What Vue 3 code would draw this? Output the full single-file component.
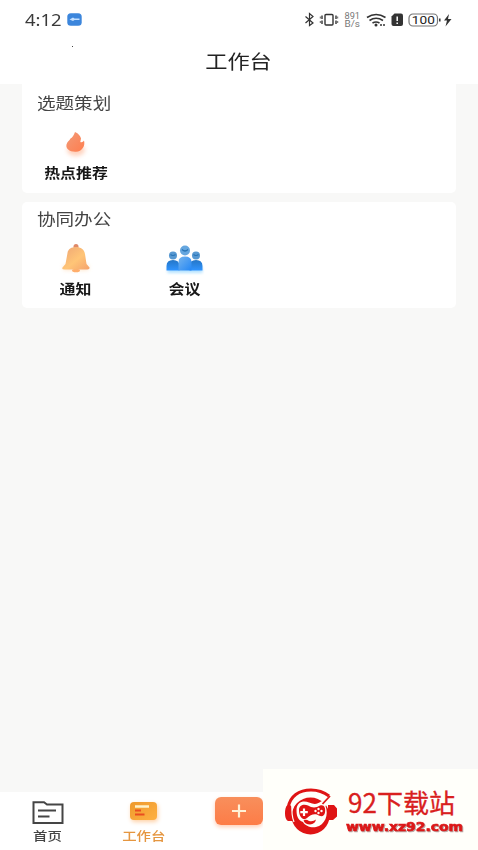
<script setup>
const topics = [{ label: '热点推荐', icon: 'flame' }]
const office = [
  { label: '通知', icon: 'bell' },
  { label: '会议', icon: 'people' },
]
</script>

<template>
  <div class="screen">
    <header class="header">
      <div class="status">
        <span class="clock"><span>4:12</span></span>
        <svg class="badge" width="15" height="13" viewBox="0 0 15 13">
          <rect x=".3" y=".3" width="14.4" height="12.4" rx="3.5" fill="#3c86dc" />
          <path d="M2.500 6.500 6 4.500l1.500 1h5v1.500H7.500L6 8z" fill="#c4e0ff" />
        </svg>
        <svg class="tray" width="150" height="18" viewBox="0 0 150 18" fill="none" stroke="#333">
          <path d="M1.500 5.500 9 12 5.500 14.500V2.500l3.500 3-7.500 6.500" stroke-width="1.200" />
          <rect x="21" y="3.500" width="8" height="10.500" rx="1" stroke-width="1.400" />
          <path d="M18 4.500v3.500M18 9.500v3.500M32 4.500v3.500M32 9.500v3.500" stroke-width="1.400" />
          <path d="M16.300 5.500v2M16.300 10v2M33.700 5.500v2M33.700 10v2" stroke-width=".8" />
          <g class="speed" fill="#777" stroke="none">
            <text x="40.500" y="7.500" textLength="15.500" lengthAdjust="spacingAndGlyphs">891</text>
            <text x="40.500" y="15.800" textLength="15.500" lengthAdjust="spacingAndGlyphs">B/s</text>
          </g>
          <path d="M63 6.500q9-6 18.500 0M65.500 9.500q6.500-4.500 13.500 0M68.500 12q3.500-2 7 0" stroke-width="1.600" />
          <circle cx="72" cy="14" r="1.500" fill="#333" stroke="none" />
          <path d="M76 14h5" stroke-width="1.500" stroke-dasharray="2 1" />
          <path d="M90.500 2.500h6.500q2 0 2 2v8.500q0 2-2 2h-7.500q-2 0-2-2V5.500z" fill="#333" stroke="none" />
          <path d="M93.200 5.500v4.500M93.200 11.500v1.600" stroke="#fff" stroke-width="1.500" />
          <rect x="105" y="3" width="28.500" height="12" rx="4" stroke="#777" stroke-width="1.200" />
          <text class="percent" x="107.800" y="13.100" textLength="23" lengthAdjust="spacingAndGlyphs" fill="#222" stroke="none">100</text>
          <path d="M135.800 7.500v3" stroke-width="1.500" />
          <path d="M145 3 140 9.500h3l-1.500 6 6-7.500h-3.500z" fill="#333" stroke="none" />
        </svg>
      </div>
      <h1 class="title"><span>工作台</span></h1>
      <i class="speck"></i>
    </header>

    <main class="content">
      <section v-for="(items, n) in [topics, office]" :key="n" class="card" :class="{ first: n === 0 }">
        <h2><span>{{ n === 0 ? '选题策划' : '协同办公' }}</span></h2>
        <div class="grid">
          <div v-for="item in items" :key="item.label" class="item">
            <svg v-if="item.icon === 'flame'" class="icon" width="40" height="36" viewBox="0 0 40 36">
              <defs>
                <linearGradient id="fire" x1="0" y1="0" x2="1" y2="1"><stop stop-color="#f29b78" /><stop offset="1" stop-color="#ff7d4e" /></linearGradient>
                <filter id="soft" x="-50%" y="-50%" width="200%" height="200%"><feGaussianBlur stdDeviation="2.200" /></filter>
              </defs>
              <ellipse cx="20.500" cy="24" rx="9" ry="6" fill="#ffc7ae" opacity=".8" filter="url(#soft)" />
              <path d="M19.500 6C23 7.500 25 10 25.500 12.500L24.800 16C26.500 16.500 27.500 16 28.500 14.500C30 20 26.500 25.500 20.500 25.700C14 26 10 22.500 11 18.500C11.500 15.500 14 15 15 12.500C16.500 12 18.500 9 19.500 6Z" fill="url(#fire)" />
            </svg>
            <svg v-else-if="item.icon === 'bell'" class="icon" width="40" height="36" viewBox="0 0 40 36">
              <defs>
                <linearGradient id="gold" x1="0" y1="0" x2="1" y2="1"><stop stop-color="#eea575" /><stop offset=".55" stop-color="#ffc577" /><stop offset="1" stop-color="#f4a16c" /></linearGradient>
                <filter id="glow" x="-30%" y="-100%" width="160%" height="300%"><feGaussianBlur stdDeviation="2" /></filter>
              </defs>
              <path d="M8 23h25v5H8z" fill="#ffd3a6" opacity=".65" filter="url(#glow)" />
              <ellipse cx="20.500" cy="28.500" rx="4" ry="1.800" fill="#ffae6c" />
              <circle cx="20.500" cy="4.500" r="2.500" fill="#df8968" />
              <path d="M12 11C12.500 7 16 5 20.500 5S29 7.500 29.500 12L31 22L34 25.500Q34.500 27.500 32 27.500H9Q6 27.500 7 25.500L10 22Z" fill="url(#gold)" />
            </svg>
            <svg v-else class="icon" width="40" height="36" viewBox="0 0 40 36">
              <defs>
                <linearGradient id="blue" x1="0" y1="0" x2="0" y2="1"><stop stop-color="#2476c7" /><stop offset="1" stop-color="#3094ff" /></linearGradient>
                <linearGradient id="sky" x1="0" y1="0" x2="1" y2="1"><stop stop-color="#74b3ed" /><stop offset="1" stop-color="#2487f5" /></linearGradient>
                <filter id="mist" x="-20%" y="-100%" width="140%" height="300%"><feGaussianBlur stdDeviation="1.800" /></filter>
              </defs>
              <path d="M3 25h35v6H3z" fill="#9bd8ff" opacity=".75" filter="url(#mist)" />
              <path d="M2 28.500V24Q2 18 8.500 18T15 24v4.500ZM25 28.500V24Q25 18 31.500 18T38 24v4.500Z" fill="url(#blue)" />
              <path d="M14 28.500V20Q14 14.500 20.500 14.500T27 20v8.500Z" fill="url(#sky)" />
              <circle cx="20.500" cy="8.500" r="5" fill="#65a6df" /><circle cx="8.500" cy="13.500" r="4" fill="#5798d1" /><circle cx="31.500" cy="13.500" r="4" fill="#5798d1" />
              <path d="M17.500 7.500q3 3 6 0M6 12.500q2.500 2 5 0M29 12.500q2.500 2 5 0" fill="none" stroke="#2874b6" stroke-width="1.200" />
            </svg>
            <span class="label">{{ item.label }}</span>
          </div>
        </div>
      </section>
    </main>

    <nav class="tabs">
      <div class="tab">
        <svg width="34" height="26" viewBox="0 0 34 26" fill="none" stroke="#454545">
          <path d="M2.500 2.200H13L16 4.500H31.500V23H2.500Z" stroke-width="2" />
          <path d="M7 10.500h18M7 16.500h11.500" stroke-width="1.800" />
        </svg>
        <span>首页</span>
      </div>
      <div class="tab active">
        <svg width="34" height="26" viewBox="0 0 34 26">
          <defs><linearGradient id="work" x1="0" y1="0" x2="1" y2="1"><stop stop-color="#ee992c" /><stop offset="1" stop-color="#ffb143" /></linearGradient></defs>
          <rect x="4" y="2" width="27" height="18" rx="4" fill="url(#work)" />
          <path d="M9 6.500h14" stroke="#fff2c9" stroke-width="2.500" />
          <path d="M9 10.500h6M9 14.500h9.500" stroke="#e94d20" stroke-width="2" />
        </svg>
        <span>工作台</span>
      </div>
      <div class="tab publish">
        <div class="plus">
          <svg width="16" height="14" viewBox="0 0 16 14"><path d="M8 .5v13M1 7h14" stroke="#fff1d6" stroke-width="2.200" /></svg>
        </div>
      </div>
    </nav>

    <aside class="mark">
      <svg class="logo" width="54" height="50" viewBox="0 0 54 50">
        <ellipse cx="26.500" cy="30" rx="19" ry="18.500" fill="#df1414" />
        <path d="M4 23C6 10 15 5.500 27 5.500Q35 5.500 42 9" fill="none" stroke="#fffffa" stroke-width="3" />
        <path d="M4 22C6 10 15 4 27 4Q37 4 45 10" fill="none" stroke="#df1414" stroke-width="3" />
        <path d="M8 24C11 13 18 9.500 27 9.500Q34 9.500 40 13" fill="none" stroke="#fffffa" stroke-width="1.600" />
        <path d="M7 19.500H3Q1 21.500 1 27.500T4 35H9ZM44 19H50L53 22.500V30.500L49 34H44Z" fill="#df1414" />
        <path d="M8.500 21Q7 28 10 36" fill="none" stroke="#fffffa" stroke-width="1.200" />
        <path d="M12.500 24C12.500 15.500 20 14 25 16.500C30 18.500 33 18.500 37 15.500L49 9.500L41.500 20C45 29 41 39 32 41C27 42 21 40 19 36C14 34 12.500 30 12.500 24Z" fill="#fffffa" />
        <path d="M15 24C15 19 20 17.500 24 19.500C28 22 32 22 36 19.500C40 18 42 22 41 26.500C40 31 37 31 33 28.500C29 27.500 26 29.500 23 32C20 35 15 32 15 24Z" fill="#df1414" />
        <path d="M20 22.500v7.500M16.300 26.200h7.500" stroke="#fffffa" stroke-width="2.200" />
        <g fill="#fffffa"><circle cx="31.500" cy="25" r="1.200" /><circle cx="34.500" cy="23" r="1.200" /><circle cx="37.500" cy="25" r="1.200" /><circle cx="34.500" cy="27" r="1.200" /></g>
        <path d="M19.500 34.500Q22 33 25 35Q29 36 32 33.500Q31 38 26 38.500Q21 38.500 19.500 34.500Z" fill="#df1414" />
        <path d="M38.500 18 46 10" stroke="#df1414" stroke-width="1.800" />
      </svg>
      <div class="words">
        <svg width="130" height="32" viewBox="0 0 130 32">
          <text class="name" x="2" y="26.500" textLength="107" lengthAdjust="spacingAndGlyphs">92下载站</text>
        </svg>
        <svg width="130" height="18" viewBox="0 0 130 18">
          <text class="url" x="0" y="12.800" textLength="117" lengthAdjust="spacingAndGlyphs">www.xz92.com</text>
        </svg>
      </div>
    </aside>
  </div>
</template>

<style>
body { margin: 0; overflow: hidden; }
</style>

<style scoped>
* { box-sizing: border-box; }
.screen { position: relative; width: 478px; height: 850px; display: flex; flex-direction: column; background: #f8f8f7; font-family: "Noto Sans CJK SC", sans-serif; color: #333; overflow: hidden; }
.header { position: relative; height: 84px; background: #fff; flex: none; }
.status { height: 39px; padding: 0 24px 0 25px; display: flex; align-items: center; }
.clock { width: 37px; font: 16.5px/20px "Noto Sans", sans-serif; color: #3a3a3a; white-space: nowrap; }
.clock span { display: inline-block; transform: scaleX(1.12); transform-origin: left; }
.badge { margin-left: 5px; }
.tray { margin-left: auto; }
.speed { font: 8.5px Roboto, sans-serif; }
.percent { font: 400 11.5px Roboto, sans-serif; }
.speck { position: absolute; left: 72px; top: 46px; width: 1px; height: 1px; background: #444; }
.title { margin: 0; height: 45px; line-height: 44px; text-align: center; font-size: 19px; font-weight: 400; color: #222; }
.title span { display: inline-block; transform: scaleX(1.17); }
.content { flex: 1; padding: 0 22px; }
.card { height: 106px; margin-bottom: 9px; padding: 6px 0 0; background: #fff; border-radius: 5px; }
.card.first { height: 109px; padding-top: 8px; border-radius: 0 0 5px 5px; }
h2 { margin: 0 0 0 15px; height: 22px; line-height: 21px; font-size: 16px; font-weight: 400; color: #444; }
h2 span { display: inline-block; transform: scaleX(1.16); transform-origin: left; }
.grid { display: flex; margin-left: -1px; }
.item { width: 109px; display: flex; flex-direction: column; align-items: center; padding-top: 12px; }
.icon { display: block; transform: translateX(-.5px); }
.label { height: 22px; line-height: 22px; font-size: 13.5px; font-weight: 600; color: #181818; transform: scaleX(1.18); margin-top: -1px; }
.tabs { height: 58px; display: flex; background: #fff; flex: none; }
.tab { width: 95.6px; display: flex; flex-direction: column; align-items: center; padding-top: 8px; font-size: 12.5px; line-height: 19px; color: #444; }
.tab svg { display: block; }
.tab span { display: inline-block; transform: scaleX(1.15); font-weight: 500; }
.active { color: #e59640; }
.active svg { filter: drop-shadow(1px 2px 2px #ffd1a6); }
.publish { padding: 5px 0 0 1px; }
.plus { width: 48px; height: 28px; display: flex; align-items: center; justify-content: center; border-radius: 6px; background: linear-gradient(#f88f5c, #fd7c47); box-shadow: 0 2px 4px #ffcdb5; }
.mark { position: absolute; left: 263px; top: 769px; width: 215px; height: 81px; padding: 17px 0 0 21px; display: flex; background: #fffffa; }
.logo { flex: none; }
.words { margin-left: 8px; flex: none; display: flex; flex-direction: column; }
.words svg { display: block; overflow: visible; }
.name { font: 26.5px "Noto Sans CJK SC", sans-serif; fill: #d9201e; stroke: #d9201e; stroke-width: .3px; }
.url { font: 700 11.5px "DejaVu Sans", sans-serif; fill: #dc1818; stroke: #dc1818; stroke-width: .6px; filter: drop-shadow(1px 1px .5px #b9a5a2); }
</style>
